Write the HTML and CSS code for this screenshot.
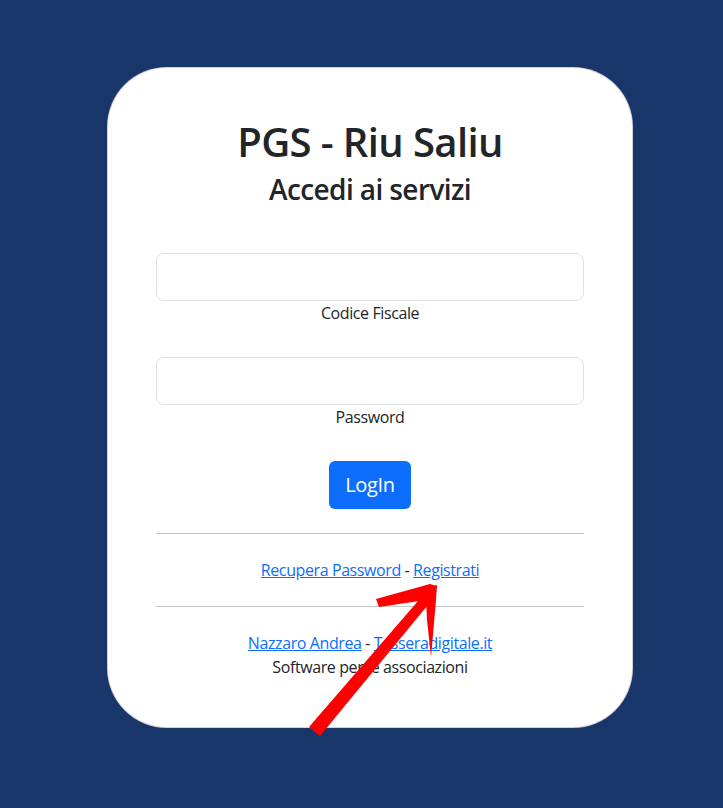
FILE: index.html
```html
<!DOCTYPE html>
<html lang="it">
<head>
    <meta charset="UTF-8">
    <meta name="viewport" content="width=device-width, initial-scale=1.0">
    <title>PGS - Riu Saliu</title>
    <link rel="stylesheet" href="styles.css">
</head>
<body>

<div class="card">
    <h1>PGS - Riu Saliu</h1>
    <h3>Accedi ai servizi</h3>

    <form class="login-form">
        <div class="field">
            <input type="text" id="cf" name="cf">
            <label for="cf">Codice Fiscale</label>
        </div>

        <div class="field">
            <input type="password" id="pwd" name="pwd">
            <label for="pwd">Password</label>
        </div>

        <button type="submit" class="btn-login">LogIn</button>
    </form>

    <hr>
    <p class="links"><a href="#">Recupera Password</a> - <a href="#">Registrati</a></p>
    <hr>

    <p class="footer">
        <a href="#">Nazzaro Andrea</a> - <a href="#">Tesseradigitale.it</a><br>
        Software per le associazioni
    </p>
</div>

<!-- annotation arrow drawn over the page -->
<svg class="arrow" width="723" height="808" viewBox="0 0 723 808">
    <path d="M309 727 L320 736 L432 600 L425 593 Z" fill="#ff0000"/>
    <path d="M376 599 L379 607 L426 600 L434 594 L437 586 L430 584 Z" fill="#ff0000"/>
    <path d="M428 588 L437 585 L436 600 L431 657 L427 620 L426 600 Z" fill="#ff0000"/>
</svg>

</body>
</html>
```

FILE: styles.css
```css
body {
    margin: 0;
    padding: 0;
    background-color: #19366b;
    font-family: 'Open Sans', 'Noto Sans', sans-serif;
    color: #212529;
    font-size: 16px;
    line-height: 1.5;
    letter-spacing: -0.4px;
    min-height: 808px;
    position: relative;
}

.card {
    box-sizing: border-box;
    width: 526px;
    margin: 67px 0 0 107px;
    padding: 50px 48px 48px 48px;
    background: white;
    border: 1px solid rgba(0, 0, 0, 0.175);
    border-radius: 60px;
    text-align: center;
}

h1 {
    margin: 0 0 7px 0;
    font-size: 40px;
    font-weight: 600;
    line-height: 1.2;
    letter-spacing: -0.6px;
}

h3 {
    margin: 0 0 46px 0;
    font-size: 28px;
    font-weight: 600;
    line-height: 1.2;
    letter-spacing: -0.6px;
}

.login-form {
    display: flex;
    flex-direction: column;
    align-items: center;
    gap: 32px;
}

.field {
    width: 100%;
    display: flex;
    flex-direction: column;
}

.field input {
    box-sizing: border-box;
    width: 100%;
    height: 48px;
    padding: 8px 16px;
    font-size: 20px;
    border: 1px solid #dee2e6;
    border-radius: 8px;
    font-family: inherit;
}

.field label {
    line-height: 24px;
}

.btn-login {
    height: 48px;
    padding: 8px 16px;
    font-size: 20px;
    font-family: inherit;
    letter-spacing: -0.3px;
    color: white;
    background-color: #0d6efd;
    border: none;
    border-radius: 6px;
    cursor: pointer;
}

hr {
    margin: 24px 0;
    border: none;
    border-top: 1px solid #c8c8c8;
}

.links,
.footer {
    margin: 0;
}

a {
    color: #0d6efd;
}

.arrow {
    position: absolute;
    top: 0;
    left: 0;
    pointer-events: none;
}
```
